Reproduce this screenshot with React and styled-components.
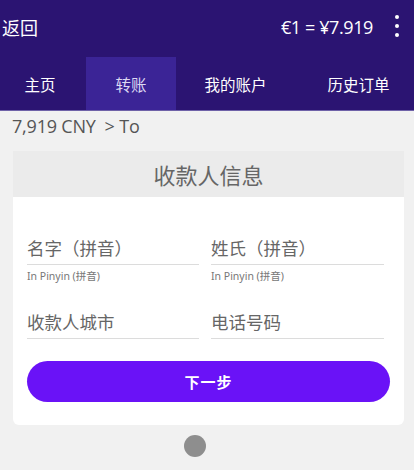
import React from "react";
import styled, { createGlobalStyle } from "styled-components";

const GlobalStyle = createGlobalStyle`
  body {
    margin: 0;
    background: #f1f1f1;
    font-family: "Noto Sans", "Noto Sans CJK SC", sans-serif;
  }
`;

const Page = styled.div`
  width: 414px;
  height: 470px;
  background: #f1f1f1;
  overflow: hidden;
`;

const Header = styled.div`
  background: #2b1472;
  color: #fff;
`;

const TopBar = styled.div`
  height: 57px;
  display: flex;
  align-items: center;
  justify-content: space-between;
  padding: 0 15px 0 2px;
`;

const Back = styled.div`
  font-size: 18px;
  font-family: "Noto Sans CJK SC", sans-serif;
  padding-bottom: 4px;
`;

const Right = styled.div`
  display: flex;
  align-items: center;
  gap: 22px;
`;

const Rate = styled.div`
  font-size: 18px;
  font-family: "Open Sans", "Noto Sans", sans-serif;
  letter-spacing: -0.4px;
  padding-bottom: 4px;
`;

const Kebab = styled.div`
  display: flex;
  flex-direction: column;
  gap: 5px;
  padding-bottom: 6px;
`;

const Dot = styled.span`
  width: 4px;
  height: 4px;
  border-radius: 50%;
  background: #fff;
`;

const Tabs = styled.div`
  display: grid;
  grid-template-columns: 86px 90px 1fr 1fr;
  height: 53px;
  border-bottom: 1px solid #6f62a8;
`;

const Tab = styled.div`
  display: flex;
  align-items: center;
  justify-content: center;
  font-size: 15.5px;
  font-family: "Noto Sans CJK SC", sans-serif;
  background: ${(p) => (p.active ? "#3b2496" : "transparent")};
  color: ${(p) => (p.active ? "#ddd8f2" : "#fff")};
  padding: 0 ${(p) => p.r || 0}px 0 ${(p) => p.l || 0}px;
`;

const Crumb = styled.div`
  padding: 3px 12px 0;
  height: 36px;
  box-sizing: border-box;
  font-size: 18px;
  color: #555;
  font-family: "Open Sans", "Noto Sans", sans-serif;
  letter-spacing: -0.2px;
`;

const Card = styled.div`
  margin: 4px 10px 0 13px;
  background: #fff;
  border-radius: 0 0 6px 6px;
  height: 274px;
  overflow: hidden;
`;

const CardTitle = styled.div`
  height: 46px;
  background: #ebebeb;
  display: flex;
  align-items: center;
  justify-content: center;
  font-size: 22px;
  color: #666;
  font-family: "Noto Sans CJK SC", sans-serif;
`;

const Form = styled.div`
  padding: 39px 16px 0 14px;
`;

const Grid = styled.div`
  display: grid;
  grid-template-columns: 172px 173px;
  column-gap: 12px;
`;

const Field = styled.div`
  height: ${(p) => p.h}px;
`;

const Label = styled.div`
  font-size: 17.5px;
  color: #666;
  font-family: "Noto Sans CJK SC", sans-serif;
  padding-bottom: 4px;
  border-bottom: 1px solid #dcdcdc;
  line-height: 24px;
`;

const Help = styled.div`
  font-size: 10.5px;
  color: #777;
  margin-top: 3px;
  font-family: "Noto Sans", "Noto Sans CJK SC", sans-serif;
`;

const Button = styled.button`
  display: block;
  margin: 22px 0 0 0;
  width: 363px;
  height: 41px;
  border: none;
  border-radius: 21px;
  background: #6a12f7;
  color: #fff;
  font-size: 15px;
  font-weight: 700;
  font-family: "Noto Sans CJK SC", sans-serif;
  letter-spacing: 1px;
`;

const Pager = styled.div`
  display: flex;
  justify-content: center;
  padding: 10px 24px 0 0;
`;

const Circle = styled.span`
  width: 22px;
  height: 22px;
  border-radius: 50%;
  background: #8e8e8e;
`;

export default function App() {
  return (
    <Page>
      <GlobalStyle />
      <Header>
        <TopBar>
          <Back>返回</Back>
          <Right>
            <Rate>€1 = ¥7.919</Rate>
            <Kebab>
              <Dot />
              <Dot />
              <Dot />
            </Kebab>
          </Right>
        </TopBar>
        <Tabs>
          <Tab r={6}>主页</Tab>
          <Tab active>转账</Tab>
          <Tab>我的账户</Tab>
          <Tab l={8}>历史订单</Tab>
        </Tabs>
      </Header>
      <Crumb>7,919 CNY &nbsp;&gt; To</Crumb>
      <Card>
        <CardTitle>收款人信息</CardTitle>
        <Form>
          <Grid>
            <Field h={74}>
              <Label>名字（拼音）</Label>
              <Help>In Pinyin (拼音)</Help>
            </Field>
            <Field h={74}>
              <Label>姓氏（拼音）</Label>
              <Help>In Pinyin (拼音)</Help>
            </Field>
            <Field h={29}>
              <Label>收款人城市</Label>
            </Field>
            <Field h={29}>
              <Label>电话号码</Label>
            </Field>
          </Grid>
          <Button>下一步</Button>
        </Form>
      </Card>
      <Pager>
        <Circle />
      </Pager>
    </Page>
  );
}
